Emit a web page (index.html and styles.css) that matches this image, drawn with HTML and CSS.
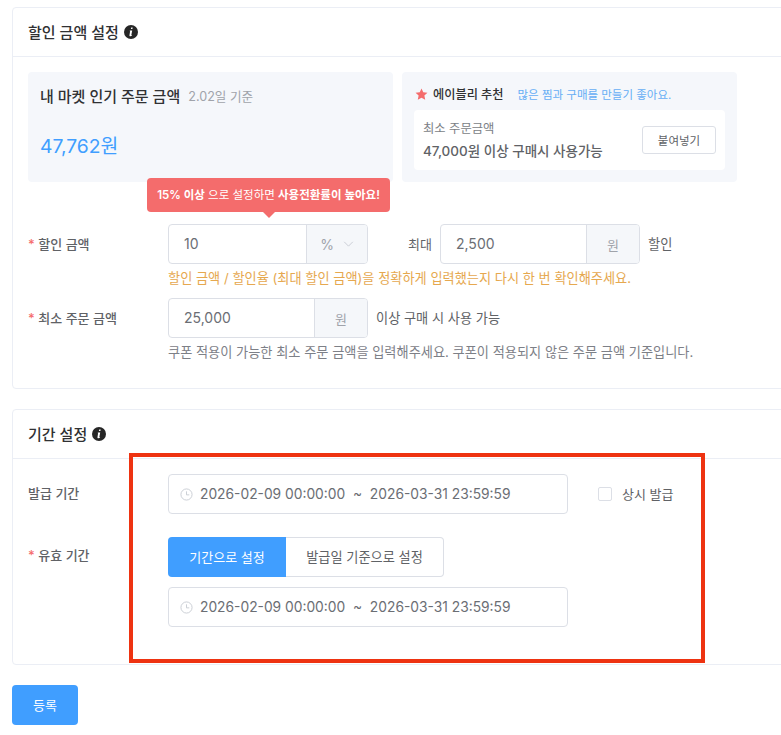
FILE: index.html
```html
<!DOCTYPE html>
<html lang="ko">
<head>
<meta charset="utf-8">
<title>쿠폰 설정</title>
<link rel="stylesheet" href="styles.css">
</head>
<body>
<main class="page">
  <section class="card card-amount">
    <header class="card-head">
      <h2>할인 금액 설정</h2>
      <svg class="info" viewBox="0 0 14 14"><circle cx="7" cy="7" r="7" fill="#262626"/><path d="M7.2 2.6h1.5l-.3 1.5H6.9zM6.1 5.5h2.1L7.4 9.8c-.1.4.1.5.6.2l.1.5c-.6.5-1.1.8-1.7.8-.8 0-1.1-.5-.9-1.3l.6-3.7-.6-.2z" fill="#fff"/></svg>
    </header>
    <div class="card-body">
      <div class="panels">
        <div class="panel panel-left">
          <div class="popular"><strong>내 마켓 인기 주문 금액</strong><span>2.02일 기준</span></div>
          <div class="price">47,762원</div>
        </div>
        <div class="panel panel-right">
          <div class="rec-head">
            <svg class="star" viewBox="0 0 14 14"><path d="M7 .6l1.9 4 4.5.6-3.3 3 .9 4.4L7 10.4l-4 2.2.9-4.4-3.3-3 4.5-.6z" fill="#f46c6c"/></svg>
            <strong>에이블리 추천</strong>
            <span>많은 찜과 구매를 만들기 좋아요.</span>
          </div>
          <div class="rec-box">
            <div class="rec-text">
              <div class="rec-sub">최소 주문금액</div>
              <div class="rec-main">47,000원 이상 구매시 사용가능</div>
            </div>
            <button class="paste" type="button">붙여넣기</button>
          </div>
        </div>
      </div>

      <div class="form-row row-discount">
        <div class="tip"><b>15% 이상</b> 으로 설정하면 <b>사용전환률이 높아요!</b></div>
        <label class="label"><i>*</i> 할인 금액</label>
        <div class="field w200">
          <span class="val">10</span>
          <span class="unit unit-select"><em>%</em>
            <svg class="chev" viewBox="0 0 12 7"><path d="M1 1l5 5 5-5" fill="none" stroke="#c4c8d0" stroke-width="1"/></svg>
          </span>
        </div>
        <span class="max-label">최대</span>
        <div class="field w200">
          <span class="val">2,500</span>
          <span class="unit unit-won">원</span>
        </div>
        <span class="after">할인</span>
      </div>
      <p class="help warn">할인 금액 / 할인율 (최대 할인 금액)을 정확하게 입력했는지 다시 한 번 확인해주세요.</p>

      <div class="form-row">
        <label class="label"><i>*</i> 최소 주문 금액</label>
        <div class="field w200">
          <span class="val">25,000</span>
          <span class="unit unit-won">원</span>
        </div>
        <span class="after">이상 구매 시 사용 가능</span>
      </div>
      <p class="help">쿠폰 적용이 가능한 최소 주문 금액을 입력해주세요. 쿠폰이 적용되지 않은 주문 금액 기준입니다.</p>
    </div>
  </section>

  <section class="card card-period">
    <header class="card-head">
      <h2>기간 설정</h2>
      <svg class="info" viewBox="0 0 14 14"><circle cx="7" cy="7" r="7" fill="#262626"/><path d="M7.2 2.6h1.5l-.3 1.5H6.9zM6.1 5.5h2.1L7.4 9.8c-.1.4.1.5.6.2l.1.5c-.6.5-1.1.8-1.7.8-.8 0-1.1-.5-.9-1.3l.6-3.7-.6-.2z" fill="#fff"/></svg>
    </header>
    <div class="card-body body-period">
      <div class="form-row">
        <label class="label plain">발급 기간</label>
        <div class="date">
          <svg class="clock" viewBox="0 0 14 14"><circle cx="7" cy="7" r="6" fill="none" stroke="#c8ccd3" stroke-width="1"/><path d="M7 3.6V7.4h3" fill="none" stroke="#c8ccd3" stroke-width="1"/></svg>
          <span>2026-02-09 00:00:00&nbsp; ~ &nbsp;2026-03-31 23:59:59</span>
        </div>
        <span class="check"><span class="box"></span><span class="check-text">상시 발급</span></span>
      </div>
      <div class="form-row row-valid">
        <label class="label"><i>*</i> 유효 기간</label>
        <div class="valid-col">
          <div class="toggle">
            <span class="tg tg-on">기간으로 설정</span>
            <span class="tg tg-off">발급일 기준으로 설정</span>
          </div>
          <div class="date">
            <svg class="clock" viewBox="0 0 14 14"><circle cx="7" cy="7" r="6" fill="none" stroke="#c8ccd3" stroke-width="1"/><path d="M7 3.6V7.4h3" fill="none" stroke="#c8ccd3" stroke-width="1"/></svg>
            <span>2026-02-09 00:00:00&nbsp; ~ &nbsp;2026-03-31 23:59:59</span>
          </div>
        </div>
      </div>
    </div>
  </section>

  <button class="submit" type="button">등록</button>
  <div class="highlight"></div>
</main>
</body>
</html>
```
FILE: styles.css
```css
* { box-sizing: border-box; }
html, body { margin: 0; height: 735px; overflow: hidden; background: #fff; }
body { font-family: Inter, "Noto Sans CJK KR", sans-serif; color: #303133; font-size: 13px; }
.page { position: relative; padding: 7px 0 0 12px; width: 781px; height: 735px; overflow: hidden; }
.card { width: 900px; border: 1px solid #ebeef5; border-radius: 4px; background: #fff; }
.card-amount { height: 382px; }
.card-period { height: 256px; margin-top: 20px; }
.card-head { height: 49px; display: flex; align-items: center; gap: 5px; padding: 0 15px; border-bottom: 1px solid #ebeef5; }
.card-head h2 { margin: 0; padding-bottom: 1px; font-size: 15px; font-weight: 500; color: #303133; }
.info { width: 14px; height: 14px; }
.card-body { padding: 15px 15px 0; }
.panels { display: flex; gap: 9px; }
.panel { height: 110px; background: #f5f7fb; border-radius: 4px; }
.panel-left { width: 365px; padding: 13px 12px; }
.popular { display: flex; align-items: center; gap: 8px; height: 20px; }
.popular strong { font-size: 15px; font-weight: 500; color: #303133; }
.popular span { font-size: 12.6px; color: #a0a3aa; }
.price { margin-top: 27px; font-size: 19.3px; line-height: 28px; color: #409eff; }
.panel-right { width: 335px; padding: 12px; }
.rec-head { display: flex; align-items: center; height: 20px; padding-left: 2px; }
.star { width: 13px; height: 13px; margin-right: 5px; margin-left: -1px; }
.rec-head strong { font-size: 12.2px; font-weight: 500; color: #303133; margin-right: 14px; }
.rec-head span { font-size: 11.5px; color: #66aef5; }
.rec-box { display: flex; align-items: center; justify-content: space-between; height: 60px; margin-top: 6px; padding: 0 9px; background: #fff; border-radius: 4px; }
.rec-sub { font-size: 12.3px; line-height: 18px; color: #7b7e85; }
.rec-main { font-size: 13.5px; line-height: 20px; margin-top: 3px; font-weight: 500; color: #606266; }
.paste { width: 74px; height: 28px; padding: 0; border: 1px solid #dcdfe6; border-radius: 3px; background: #fff; font: inherit; font-size: 11.5px; color: #606266; }
.form-row { display: flex; align-items: center; }
.row-discount { position: relative; margin-top: 42px; }
.tip { position: absolute; left: 119px; top: -46px; width: 243px; height: 34px; padding-bottom: 2px; display: flex; align-items: center; justify-content: center; white-space: pre; background: #f46c6c; border-radius: 4px; color: #fff; font-size: 11.5px; }
.tip b { font-weight: 600; }
.tip::after { content: ""; position: absolute; left: 116px; bottom: -6px; border: 6px solid transparent; border-bottom: 0; border-top-color: #f46c6c; }
.label { width: 140px; padding-bottom: 2px; font-size: 13px; font-weight: 500; color: #606266; }
.label.plain { padding-bottom: 4px; }
.label i { font-style: normal; color: #f56c6c; }
.field { display: flex; height: 40px; border: 1px solid #dcdfe6; border-radius: 4px; overflow: hidden; }
.w200 { width: 200px; }
.val { flex: 1; padding-left: 15px; font-size: 14px; line-height: 38px; color: #6b6e74; }
.unit { display: flex; align-items: center; justify-content: center; background: #f5f7fa; border-left: 1px solid #dcdfe6; color: #a0a3aa; font-size: 13px; }
.unit-select { width: 61px; gap: 9px; font-size: 14px; }
.unit-select em { font-style: normal; }
.unit-won { width: 53px; }
.chev { width: 11px; height: 6px; }
.max-label { width: 72px; padding: 0 0 2px 40px; font-size: 13px; color: #606266; white-space: nowrap; }
.after { margin-left: 8px; padding-bottom: 2px; font-size: 13.2px; color: #606266; white-space: nowrap; }
.help { margin: 0 0 0 140px; height: 34px; font-size: 13.2px; line-height: 28px; color: #7d8087; white-space: nowrap; }
.warn { color: #e6a84f; }
.body-period { padding-top: 15px; }
.date { display: flex; align-items: center; width: 400px; height: 40px; padding-left: 11px; border: 1px solid #dcdfe6; border-radius: 4px; font-size: 13.8px; line-height: 36px; color: #6b6e74; white-space: nowrap; }
.clock { width: 13px; height: 13px; margin-right: 7px; }
.check { display: flex; align-items: center; margin-left: 30px; font-size: 13px; color: #606266; }
.check-text { padding-bottom: 2px; }
.box { width: 14px; height: 14px; margin-right: 10px; border: 1px solid #dcdfe6; border-radius: 2px; }
.row-valid { align-items: flex-start; margin-top: 23px; }
.row-valid .label { line-height: 36px; }
.valid-col { display: flex; flex-direction: column; gap: 10px; }
.toggle { display: flex; height: 40px; font-size: 13px; }
.tg { display: flex; align-items: center; justify-content: center; padding-bottom: 1px; }
.tg-on { width: 118px; background: #409eff; color: #fff; border-radius: 4px 0 0 4px; }
.tg-off { width: 158px; border: 1px solid #dcdfe6; border-left: 0; border-radius: 0 4px 4px 0; color: #606266; font-size: 13.2px; }
.submit { display: block; width: 66px; height: 40px; margin-top: 20px; padding: 0 0 2px; border: 0; border-radius: 4px; background: #409eff; color: #fff; font: inherit; font-size: 13px; }
.highlight { position: absolute; left: 129px; top: 453px; width: 576px; height: 210px; border: 4px solid #ee3311; pointer-events: none; }
```
